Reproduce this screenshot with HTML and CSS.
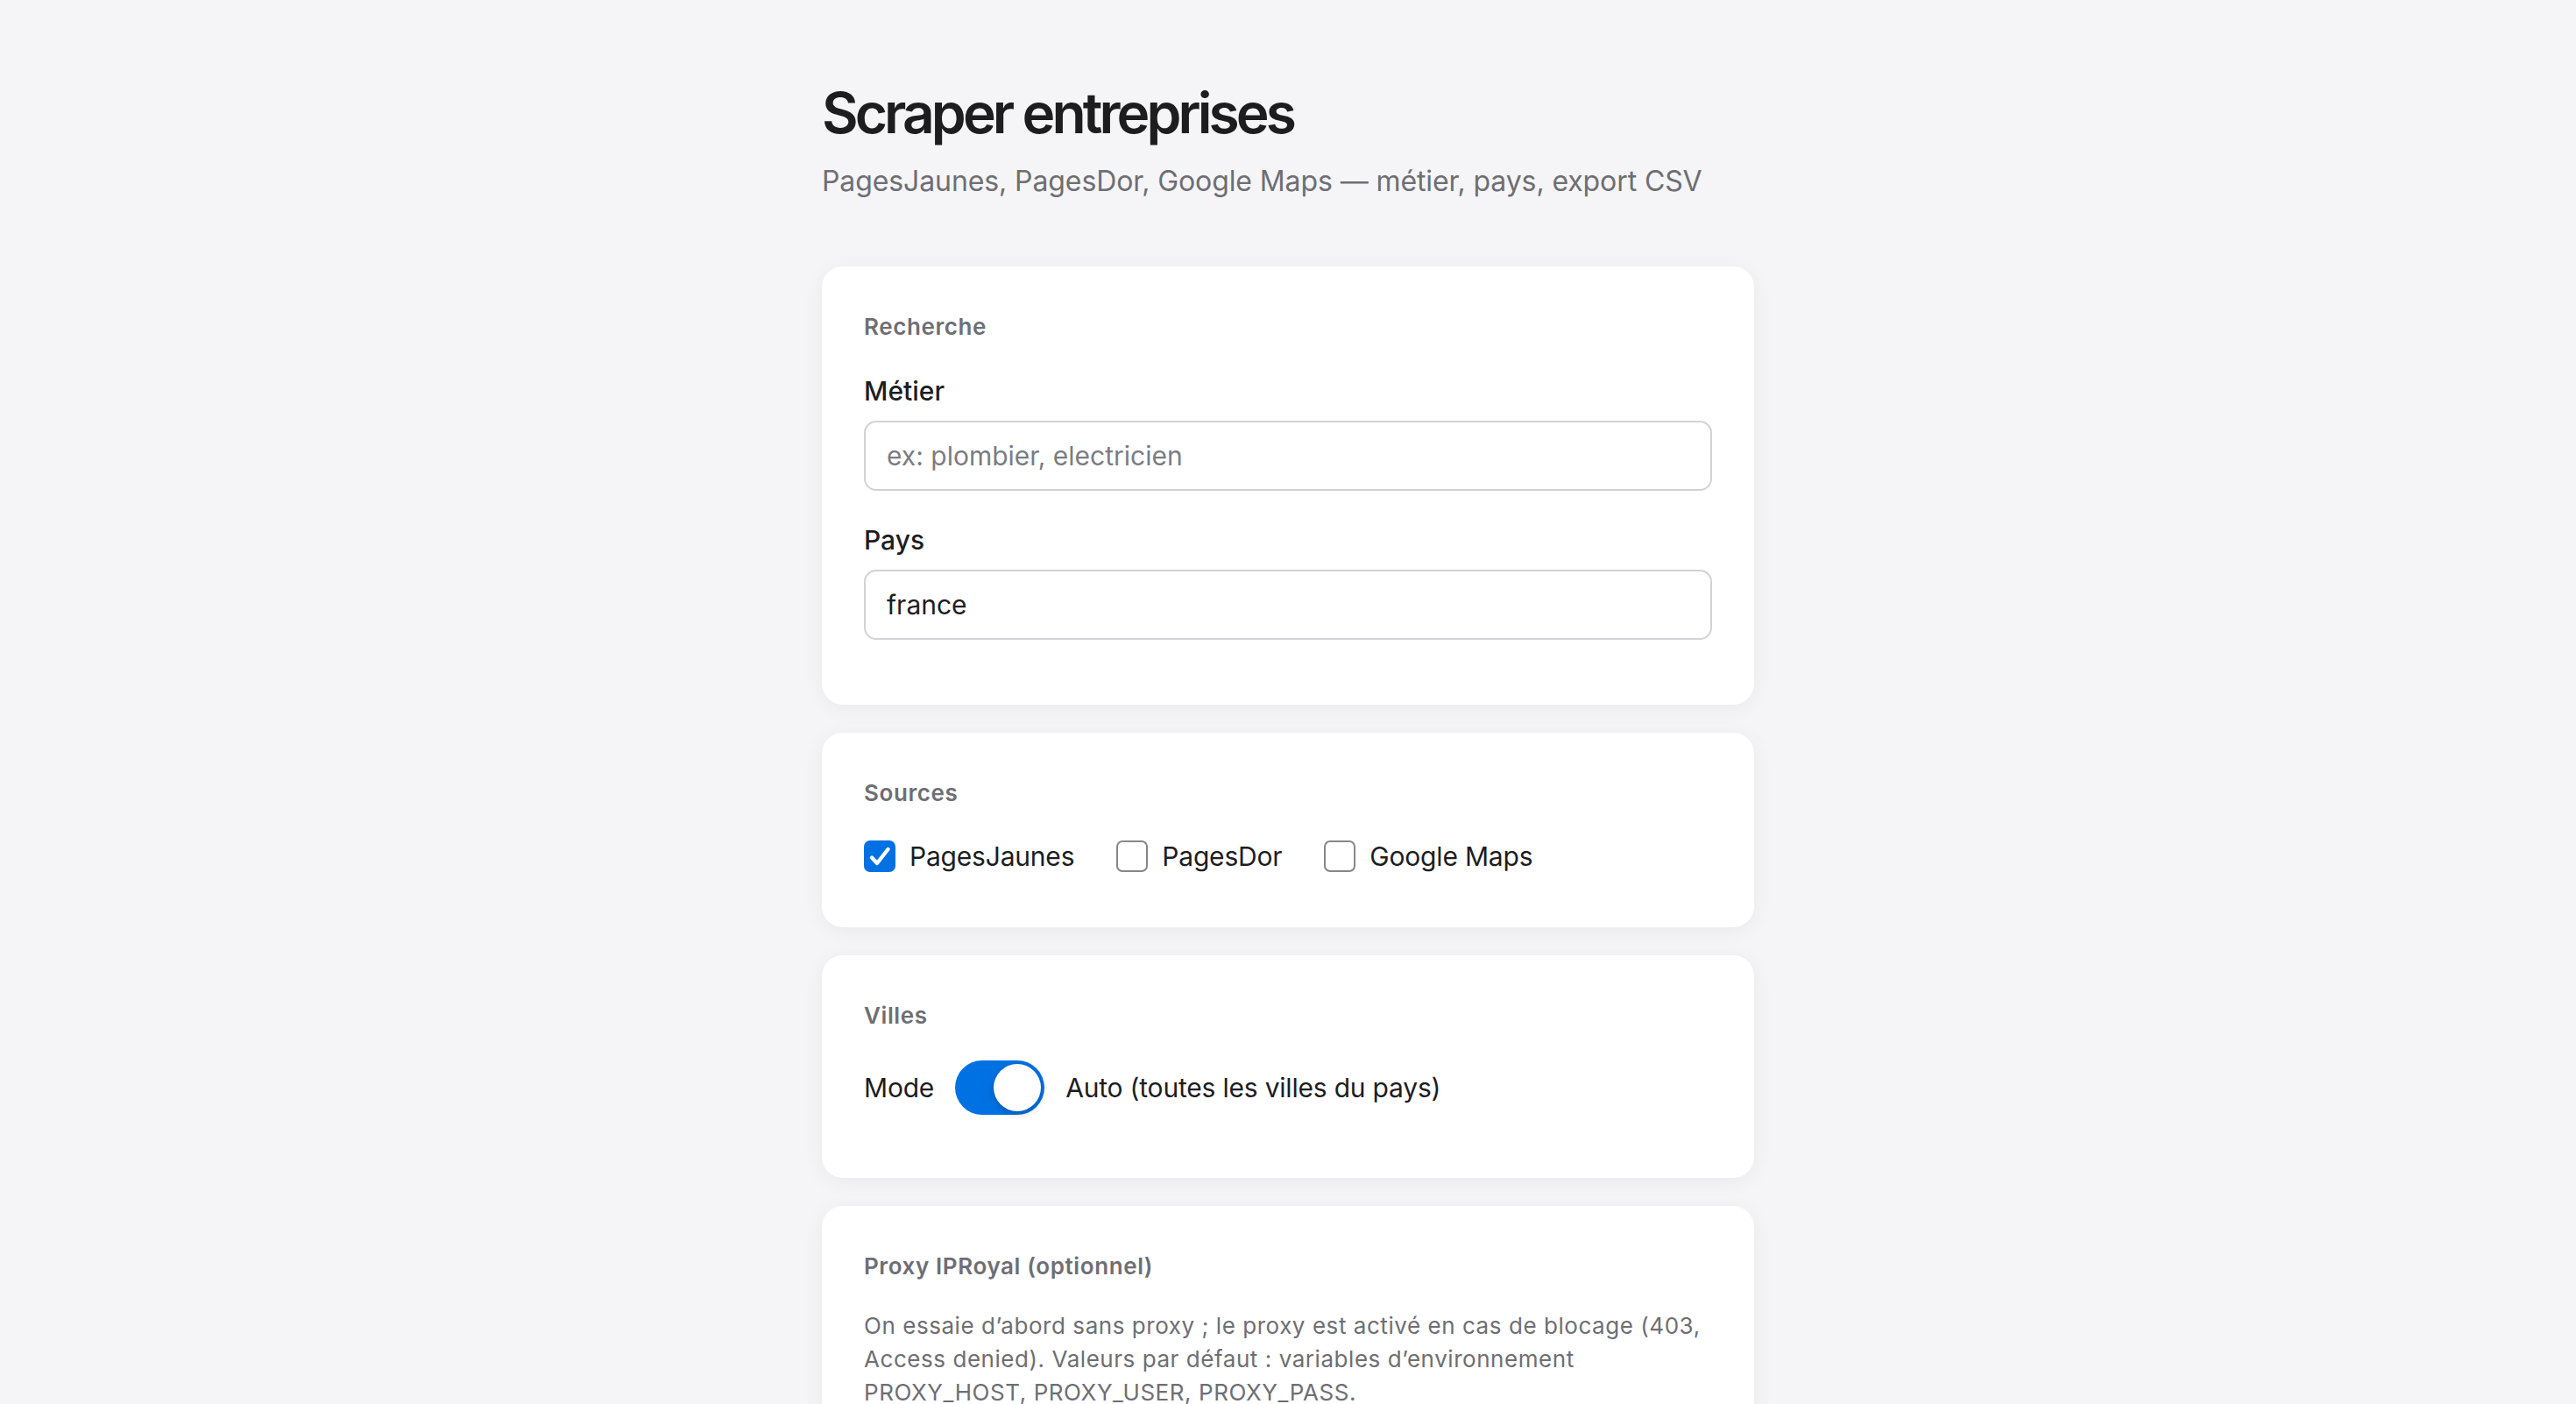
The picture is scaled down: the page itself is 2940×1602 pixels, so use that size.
FILE: index.html
```html
<!DOCTYPE html>
<html lang="fr">
<head>
<meta charset="utf-8">
<title>Scraper entreprises</title>
<link rel="stylesheet" href="styles.css">
</head>
<body>
<main class="page">
  <header class="header">
    <h1 class="title">Scraper entreprises</h1>
    <p class="subtitle">PagesJaunes, PagesDor, Google Maps — métier, pays, export CSV</p>
  </header>

  <section class="card card-search">
    <h2 class="section-title">Recherche</h2>
    <div class="fields">
      <div class="field">
        <label class="field-label" for="metier">Métier</label>
        <input class="text-input" id="metier" type="text" placeholder="ex: plombier, electricien">
      </div>
      <div class="field">
        <label class="field-label" for="pays">Pays</label>
        <input class="text-input" id="pays" type="text" value="france">
      </div>
    </div>
  </section>

  <section class="card card-sources">
    <h2 class="section-title">Sources</h2>
    <div class="checks">
      <label class="check">
        <span class="box box-on"><svg viewBox="0 0 36 36" width="36" height="36"><path d="M9 19.5 L15 26 L27.5 10" fill="none" stroke="#fff" stroke-width="4.4" stroke-linecap="round" stroke-linejoin="round"/></svg></span>
        <span class="check-text">PagesJaunes</span>
      </label>
      <label class="check">
        <span class="box"></span>
        <span class="check-text">PagesDor</span>
      </label>
      <label class="check">
        <span class="box"></span>
        <span class="check-text">Google Maps</span>
      </label>
    </div>
  </section>

  <section class="card card-villes">
    <h2 class="section-title">Villes</h2>
    <div class="mode-row">
      <span class="mode-label">Mode</span>
      <span class="toggle"><span class="knob"></span></span>
      <span class="mode-text">Auto (toutes les villes du pays)</span>
    </div>
  </section>

  <section class="card card-proxy">
    <h2 class="section-title">Proxy IPRoyal (optionnel)</h2>
    <p class="note">On essaie d’abord sans proxy ; le proxy est activé en cas de blocage (403, Access denied). Valeurs par défaut : variables d’environnement PROXY_HOST, PROXY_USER, PROXY_PASS.</p>
  </section>
</main>
</body>
</html>
```

FILE: styles.css
```css
* { box-sizing: border-box; }

html, body {
  margin: 0;
  padding: 0;
  background: #f5f5f7;
}

body {
  font-family: Inter, "Noto Sans", "Liberation Sans", sans-serif;
  color: #1d1d1f;
}

.page {
  width: 1064px;
  margin: 0 auto;
  padding-top: 90px;
  padding-bottom: 96px;
}

.header {
  margin-bottom: 75px;
}

.title {
  margin: 0;
  font-size: 64px;
  line-height: 77px;
  font-weight: 600;
  letter-spacing: -3.9px;
  color: #1d1d1f;
}

.subtitle {
  margin: 17px 0 0;
  font-size: 32px;
  line-height: 45px;
  color: #6e6e73;
  letter-spacing: -0.1px;
}

.card {
  background: #ffffff;
  border-radius: 24px;
  padding: 48px;
  margin-bottom: 32px;
  box-shadow: 0 4px 24px rgba(0, 0, 0, 0.05);
}

.section-title {
  margin: 0 0 28px;
  font-size: 26px;
  line-height: 42px;
  font-weight: 600;
  letter-spacing: 0.6px;
  color: #6e6e73;
}

.fields {
  margin-bottom: 26px;
}

.field + .field {
  margin-top: 32px;
}

.field-label {
  display: block;
  padding-top: 6px;
  margin: 0 0 16px;
  font-size: 30px;
  line-height: 36px;
  font-weight: 500;
  color: #1d1d1f;
}

.text-input {
  display: block;
  width: 100%;
  height: 80px;
  padding: 0 24px;
  border: 2px solid #d2d2d7;
  border-radius: 14px;
  background: #fff;
  font-family: inherit;
  font-size: 30px;
  color: #1d1d1f;
  outline: none;
}

.text-input::placeholder {
  color: #7c7c82;
}

.checks {
  display: flex;
  align-items: center;
  gap: 48px;
  padding-top: 5px;
  margin-bottom: 15px;
}

.check {
  display: flex;
  align-items: center;
  gap: 16px;
  font-size: 30px;
  line-height: 36px;
  letter-spacing: -0.2px;
}

.box {
  width: 36px;
  height: 36px;
  border: 2px solid #86868b;
  border-radius: 7px;
  background: #fff;
  flex: none;
}

.box-on {
  border: none;
  background: #0071e3;
}

.box-on svg {
  display: block;
}

.mode-row {
  display: flex;
  align-items: center;
  gap: 24px;
  padding-top: 2px;
  margin-bottom: 24px;
  font-size: 30px;
  line-height: 36px;
  letter-spacing: -0.2px;
}

.toggle {
  position: relative;
  width: 102px;
  height: 62px;
  border-radius: 31px;
  background: #0071e3;
  flex: none;
}

.knob {
  position: absolute;
  top: 4px;
  right: 4px;
  width: 54px;
  height: 54px;
  border-radius: 50%;
  background: #fff;
  box-shadow: 0 3px 8px rgba(0, 0, 0, 0.22);
}

.note {
  margin: 6px 0 0;
  font-size: 26px;
  line-height: 38px;
  letter-spacing: 0.55px;
  color: #6e6e73;
}
```
